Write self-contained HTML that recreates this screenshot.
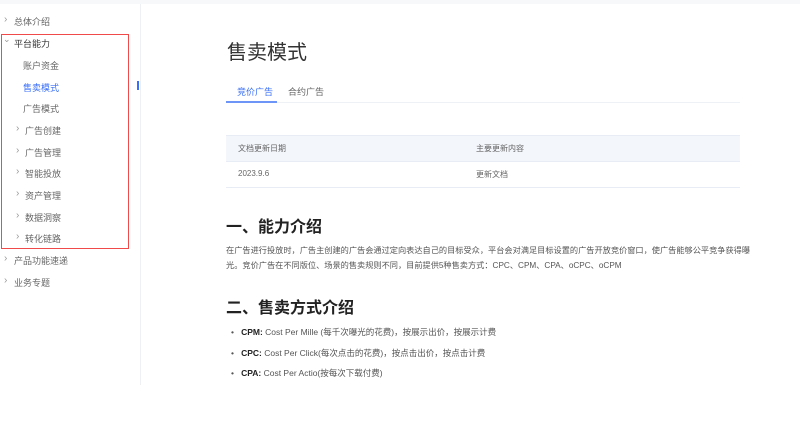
<html><head><style>
body{margin:0;width:800px;height:437px;background:#fff;font-family:"Liberation Sans","Noto Sans CJK SC",sans-serif;position:relative;overflow:hidden}
.a{position:absolute;white-space:nowrap}
.s{font-size:9px;color:#666}
.ch{font-size:10px;color:#999}
</style></head><body>
<div class="a" style="left:0;top:0;width:140px;height:385px;border-right:1px solid #eef0f4"></div>
<div class="a" style="left:0;top:0;width:800px;height:4px;background:#f7f8fa"></div>
<div class="a" style="left:1px;top:34px;width:126px;height:213px;border:1.5px solid #f04a4a"></div>
<div class="a" style="left:137px;top:81px;width:2px;height:9px;background:#3a6ff7"></div>
<div class="a ch" style="left:4px;top:14px">›</div><div class="a s" style="left:14px;top:15px">总体介绍</div>
<div class="a ch" style="left:3px;top:34px;font-size:9px">⌄</div><div class="a s" style="left:14px;top:37px;color:#333">平台能力</div>
<div class="a s" style="left:23px;top:59px">账户资金</div>
<div class="a s" style="left:23px;top:81px;color:#3a6ff7">售卖模式</div>
<div class="a s" style="left:23px;top:102px">广告模式</div>
<div class="a ch" style="left:16px;top:123px">›</div><div class="a s" style="left:25px;top:124px">广告创建</div>
<div class="a ch" style="left:16px;top:145px">›</div><div class="a s" style="left:25px;top:146px">广告管理</div>
<div class="a ch" style="left:16px;top:166px">›</div><div class="a s" style="left:25px;top:167px">智能投放</div>
<div class="a ch" style="left:16px;top:188px">›</div><div class="a s" style="left:25px;top:189px">资产管理</div>
<div class="a ch" style="left:16px;top:210px">›</div><div class="a s" style="left:25px;top:211px">数据洞察</div>
<div class="a ch" style="left:16px;top:231px">›</div><div class="a s" style="left:25px;top:232px">转化链路</div>
<div class="a ch" style="left:4px;top:253px">›</div><div class="a s" style="left:14px;top:254px">产品功能速递</div>
<div class="a ch" style="left:4px;top:275px">›</div><div class="a s" style="left:14px;top:276px">业务专题</div>

<div class="a" style="left:227px;top:36px;font-size:20px;color:#333">售卖模式</div>
<div class="a" style="left:237px;top:85px;font-size:9px;color:#3a6ff7">竞价广告</div>
<div class="a" style="left:288px;top:85px;font-size:9px;color:#666">合约广告</div>
<div class="a" style="left:226px;top:102px;width:514px;height:1px;background:#eef1f6"></div>
<div class="a" style="left:226px;top:101px;width:51px;height:2px;background:#6d95f7"></div>
<div class="a" style="left:226px;top:135px;width:514px;height:25px;background:#f3f6fb;border-top:1px solid #e8edf5;border-bottom:1px solid #e8edf5"></div>
<div class="a" style="left:226px;top:187px;width:514px;height:1px;background:#e8edf5"></div>
<div class="a" style="left:238px;top:143px;font-size:8px;color:#666">文档更新日期</div>
<div class="a" style="left:476px;top:143px;font-size:8px;color:#666">主要更新内容</div>
<div class="a" style="left:238px;top:169px;font-size:8px;color:#666">2023.9.6</div>
<div class="a" style="left:476px;top:169px;font-size:8px;color:#666">更新文档</div>
<div class="a" style="left:226px;top:213px;font-size:16px;font-weight:bold;color:#222">一、能力介绍</div>
<div class="a" style="left:226px;top:243px;font-size:8.2px;color:#555;line-height:15px;width:526px;white-space:normal">在广告进行投放时，广告主创建的广告会通过定向表达自己的目标受众，平台会对满足目标设置的广告开放竞价窗口，使广告能够公平竞争获得曝光。竞价广告在不同版位、场景的售卖规则不同，目前提供5种售卖方式：CPC、CPM、CPA、oCPC、oCPM</div>
<div class="a" style="left:226px;top:294px;font-size:16px;font-weight:bold;color:#222">二、售卖方式介绍</div>
<div class="a" style="left:231px;top:326px;font-size:8.5px;color:#555">•&nbsp;&nbsp;&nbsp;<b style="color:#222">CPM:</b> Cost Per Mille (每千次曝光的花费)，按展示出价，按展示计费</div>
<div class="a" style="left:231px;top:347px;font-size:8.5px;color:#555">•&nbsp;&nbsp;&nbsp;<b style="color:#222">CPC:</b> Cost Per Click(每次点击的花费)，按点击出价，按点击计费</div>
<div class="a" style="left:231px;top:367px;font-size:8.5px;color:#555">•&nbsp;&nbsp;&nbsp;<b style="color:#222">CPA:</b> Cost Per Actio(按每次下载付费)</div>
</body></html>
